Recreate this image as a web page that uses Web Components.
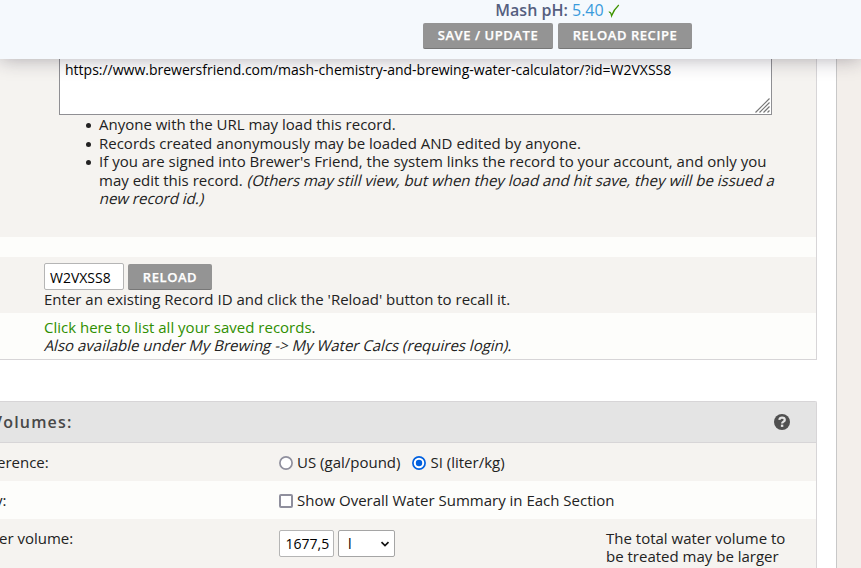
<!DOCTYPE html>
<html lang="en">
<head>
<meta charset="utf-8">
<title>Mash Chemistry and Brewing Water Calculator</title>
<style>
    body {
        margin: 0;
        height: 568px;
        overflow: hidden;
        background: #f3efeb;
        color: #222;
        font: 15px/18.5px "Open Sans", "Noto Sans", sans-serif;
    }
</style>
</head>
<body>
<water-calculator></water-calculator>

<script>
const define = function (name, html) {
    const template = document.createElement('template');
    template.innerHTML = html;

    window.customElements.define(name, class extends HTMLElement {
        constructor() {
            super();
            this.attachShadow({mode: 'open'}).appendChild(template.content.cloneNode(true));
        }
    });
};

define('action-button', `
    <style>
        :host { display: inline-block; }
        button {
            display: block;
            box-sizing: border-box;
            width: 100%;
            height: 26px;
            padding: var(--drop, 0px) 0 0;
            border: 0;
            border-bottom: 1px solid #777;
            border-radius: 2px;
            background: #949494;
            color: #fff;
            font: 600 13px/23px "Open Sans", sans-serif;
            letter-spacing: 0.55px;
            white-space: nowrap;
            -webkit-text-stroke: 0.25px #fff;
        }
    </style>
    <button type="button"><slot></slot></button>
`);

// upright letters slanted, one line at a time
define('slanted-text', `
    <style>
        :host {
            display: inline-block;
            transform: skewX(-14deg);
            transform-origin: 0 75%;
            white-space: nowrap;
        }
    </style>
    <slot></slot>
`);

define('text-box', `
    <style>
        :host {
            display: block;
            box-sizing: border-box;
            height: 27px;
            padding: 0 5px;
            border: 1px solid #b5b5b5;
            border-radius: 2px;
            background: #fff;
            color: #000;
            font-size: 14px;
            line-height: 26px;
            white-space: nowrap;
        }
    </style>
    <slot></slot>
`);

define('unit-select', `
    <style>
        :host {
            display: flex;
            box-sizing: border-box;
            align-items: center;
            justify-content: space-between;
            width: 57px;
            height: 27px;
            padding: 0 4px 0 9px;
            border: 1px solid #a5a5a5;
            border-radius: 2px;
            background: #fff;
            color: #000;
            font-size: 14px;
        }
    </style>
    <slot></slot>
    <svg width="10" height="8" viewBox="0 0 10 8">
        <path d="M1.5 2.2 5 5.6 8.5 2.2" fill="none" stroke="#111" stroke-width="1.7"/>
    </svg>
`);

define('url-area', `
    <style>
        :host {
            display: flex;
            box-sizing: border-box;
            justify-content: space-between;
            width: 713px;
            height: 56px;
            padding: 2px 1px 1px 5px;
            border: 1px solid #8f8f93;
            border-top: 0;
            background: #fff;
            color: #000;
            font-size: 14px;
        }
        svg { align-self: flex-end; }
    </style>
    <slot></slot>
    <svg width="15" height="15" viewBox="0 0 15 15">
        <path d="M.5 14.5 14.5.5M4.5 14.5 14.5 4.5M8.5 14.5 14.5 8.5M12.5 14.5 14.5 12.5" stroke="#777" stroke-width="1.2"/>
    </svg>
`);

define('choice-mark', `
    <style>
        :host { display: block; height: 14px; }
        svg { display: block; }
        .on, .off, .box { display: none; }
        :host([kind="on"]) .on, :host([kind="off"]) .off, :host([kind="box"]) .box { display: inline; }
    </style>
    <svg width="14" height="14" viewBox="0 0 14 14">
        <circle class="off" cx="7" cy="7" r="6.1" fill="#fff" stroke="#8f8f9d" stroke-width="1.7"/>
        <g class="on">
            <circle cx="7" cy="7" r="6.1" fill="#fff" stroke="#0060df" stroke-width="1.7"/>
            <circle cx="7" cy="7" r="3.2" fill="#0060df"/>
        </g>
        <rect class="box" x="1" y="1" width="12" height="12" rx="1" fill="#fff" stroke="#8f8f9d" stroke-width="2"/>
    </svg>
`);

define('help-icon', `
    <style>
        :host { display: block; }
        svg { display: block; }
    </style>
    <svg width="16" height="16" viewBox="0 0 16 16">
        <circle cx="8" cy="8" r="8" fill="#505050"/>
        <path d="M5.3 5.9C5.6 4.300 6.700 3.600 8 3.600c1.700 0 2.800.9 2.800 2.300C10.800 7.700 8.100 7.500 8.100 9.600" fill="none" stroke="#e4e4e4" stroke-width="2.200"/>
        <path d="M6.900 10.600h2.400v2.300H6.900z" fill="#e4e4e4"/>
    </svg>
`);

define('status-bar', `
    <style>
        :host {
            display: flex;
            position: relative;
            z-index: 1;
            box-sizing: border-box;
            flex: none;
            flex-direction: column;
            align-items: center;
            height: 59px;
            padding-left: 254px;
            background: #f5f9fd;
            box-shadow: 0 0 20px rgba(40, 30, 50, 0.36);
        }
        .ph {
            display: flex;
            box-sizing: border-box;
            align-items: center;
            height: 23px;
            padding-bottom: 2px;
            line-height: 21px;
            font-size: 16px;
            color: #555f80;
            white-space: pre;
        }
        b { font-weight: 600; }
        .value { color: #3a9bdc; }
        svg { margin-left: 4px; }
        .actions { display: flex; gap: 5px; }
    </style>
    <div class="ph"><b>Mash pH:</b><span class="value"> 5.40</span><svg width="12" height="14" viewBox="0 0 12 14"><path d="M.8 8.200C2 7.600 2.900 9 3.600 11.800 5 8 7.500 4 10.800 1" fill="none" stroke="#3f9400" stroke-width="1.300"/></svg></div>
    <div class="actions">
        <action-button style="width: 130px">SAVE / UPDATE</action-button>
        <action-button style="width: 134px">RELOAD RECIPE</action-button>
    </div>
`);

define('table-row', `
    <style>
        :host {
            display: block;
            box-sizing: border-box;
            overflow: hidden;
            background: #f5f3f0;
        }
        :host([light]) { background: #fdfdfb; }
    </style>
    <slot></slot>
`);

define('record-panel', `
    <style>
        :host {
            display: block;
            box-sizing: border-box;
            width: 817px;
            height: 301px;
            border: solid #d7d5d7;
            border-width: 0 1px 1px 0;
        }
        url-area { margin-left: 59px; }
        ul { margin: 0; padding: 0 30px 0 99px; list-style: none; }
        li::before {
            content: "";
            display: inline-block;
            width: 5px;
            height: 5px;
            margin: 0 8px 2px -13px;
            border-radius: 50%;
            background: #222;
        }
        .reload { display: flex; gap: 4px; padding: 6px 0 0 44px; }
        .reload text-box { width: 80px; line-height: 27px; }
        .reload action-button { width: 84px; margin-top: 1px; --drop: 1px; }
        p { margin: 0 0 0 44px; }
        a { color: #2f8f00; text-decoration: none; }
    </style>
    <table-row style="height: 178px">
        <url-area>https://www.brewersfriend.com/mash-chemistry-and-brewing-water-calculator/?id=W2VXSS8</url-area>
        <ul>
            <li>Anyone with the URL may load this record.</li>
            <li>Records created anonymously may be loaded AND edited by anyone.</li>
            <li>If you are signed into Brewer's Friend, the system links the record to your account, and only you<br>may edit this record. <slanted-text>(Others may still view, but when they load and hit save, they will be issued a</slanted-text><br><slanted-text>new record id.)</slanted-text></li>
        </ul>
    </table-row>
    <table-row light style="height: 20px"></table-row>
    <table-row style="height: 56px">
        <div class="reload">
            <text-box>W2VXSS8</text-box>
            <action-button>RELOAD</action-button>
        </div>
        <p>Enter an existing Record ID and click the 'Reload' button to recall it.</p>
    </table-row>
    <table-row light style="height: 46px">
        <p style="padding-top: 5px; line-height: 18px"><a>Click here to list all your saved records</a>.<br><slanted-text>Also available under My Brewing -&gt; My Water Calcs (requires login).</slanted-text></p>
    </table-row>
`);

define('volume-panel', `
    <style>
        :host {
            display: block;
            box-sizing: border-box;
            width: 817px;
            height: 167px;
            margin-top: 41px;
            border: solid #d7d5d7;
            border-width: 1px 1px 0 0;
            border-radius: 0 2px 0 0;
        }
        header {
            display: flex;
            box-sizing: border-box;
            align-items: center;
            justify-content: space-between;
            height: 41px;
            padding-right: 26px;
            border-bottom: 1px solid #d7d5d7;
            background: #e4e4e4;
            color: #484848;
            font-size: 16px;
            font-weight: 600;
            letter-spacing: 1.2px;
        }
        header span { margin-left: -8px; }
        .row {
            display: grid;
            box-sizing: border-box;
            grid-template-columns: 279px 327px 190px;
            align-items: center;
            height: 38px;
            padding-top: 1px;
        }
        .row.tall { height: 49px; padding-top: 10px; align-items: start; line-height: 18px; }
        .tall .choices { padding-top: 1px; }
        .choices { display: flex; align-items: center; gap: 4px; white-space: nowrap; }
        .choices span + choice-mark { margin-left: 8px; }
        .label { margin-left: -3px; white-space: nowrap; }
        .tall .label { margin-left: -1px; }
    </style>
    <header><span>Volumes:</span><help-icon></help-icon></header>
    <table-row>
        <div class="row">
            <span class="label">erence:</span>
            <div class="choices">
                <choice-mark kind="off"></choice-mark><span>US (gal/pound)</span>
                <choice-mark kind="on"></choice-mark><span>SI (liter/kg)</span>
            </div>
        </div>
    </table-row>
    <table-row light>
        <div class="row">
            <span class="label" style="margin-left: -5px">y:</span>
            <div class="choices"><choice-mark kind="box"></choice-mark><span>Show Overall Water Summary in Each Section</span></div>
        </div>
    </table-row>
    <table-row>
        <div class="row tall">
            <span class="label">er volume:</span>
            <div class="choices">
                <text-box style="width: 55px; padding-left: 5.5px">1677,5</text-box>
                <unit-select>l</unit-select>
            </div>
            <span>The total water volume to be treated may be larger</span>
        </div>
    </table-row>
`);

define('water-calculator', `
    <style>
        :host { display: flex; flex-direction: column; height: 568px; overflow: hidden; }
        main {
            flex: 1;
            box-sizing: border-box;
            width: 837px;
            border-right: 1px solid #c8c8c8;
            background: #fff;
        }
    </style>
    <status-bar></status-bar>
    <main>
        <record-panel></record-panel>
        <volume-panel></volume-panel>
    </main>
`);
</script>
</body>
</html>
